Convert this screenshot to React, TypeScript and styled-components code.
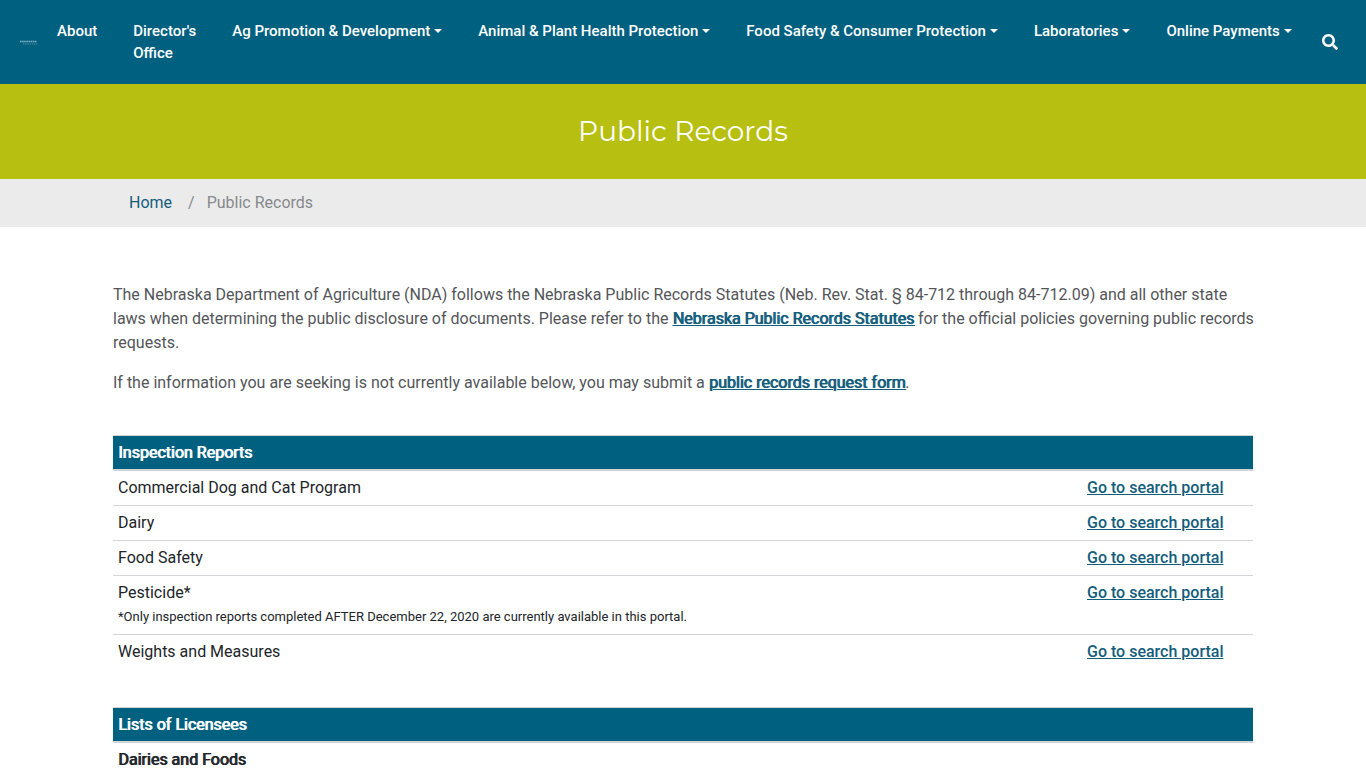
import React from "react";
import styled, { createGlobalStyle, css } from "styled-components";
import { FaSearch } from "react-icons/fa";

const colors = {
  teal: "#00607f",
  lime: "#b7bf10",
  link: "#135d7c",
  rule: "#d3d6d9",
  ink: "#212529",
  body: "#54565a",
};

const emphasis = css`
  font-weight: 400;
  text-shadow: 1px 0 currentColor;
`;

const GlobalStyle = createGlobalStyle`
  *, *::before, *::after { box-sizing: border-box; }
  html { scrollbar-width: none; }
  body {
    margin: 0;
    background: #fff;
    color: ${colors.body};
    font: 400 16px/24px Roboto, "Liberation Sans", sans-serif;
  }
`;

const TopBar = styled.header`
  display: flex;
  align-items: center;
  min-height: 84px;
  padding: 0 20px;
  background: ${colors.teal};
  color: #fff;
`;

const LogoLink = styled.a`
  display: flex;
  flex: none;
  width: 17px;
`;

const NavList = styled.ul`
  display: flex;
  flex: 1;
  gap: 36px;
  align-self: stretch;
  margin: 0;
  padding: 20px 0 20px 20px;
  list-style: none;
`;

const NavItem = styled.li<{ $wrap?: boolean }>`
  width: ${({ $wrap }) => ($wrap ? "min-content" : "auto")};
  white-space: ${({ $wrap }) => ($wrap ? "normal" : "nowrap")};
`;

const NavLink = styled.a<{ $menu?: boolean }>`
  display: flex;
  align-items: center;
  gap: 4px;
  color: #fff;
  font-size: 15px;
  font-weight: 500;
  line-height: 22px;
  text-decoration: none;

  &::after {
    content: ${({ $menu }) => ($menu ? '""' : "none")};
    border: 4px solid transparent;
    border-top-color: #fff;
    border-bottom: 0;
  }
`;

const SearchButton = styled.button`
  display: flex;
  padding: 8px;
  border: 0;
  background: none;
  color: #fff;
  font-size: 16px;
  cursor: pointer;
`;

const TitleBand = styled.div`
  padding: 30px 16px 31px;
  background: ${colors.lime};
  color: #fff;
  text-align: center;
`;

const PageTitle = styled.h1`
  margin: 0;
  font: 400 28px/34px Montserrat, Inter, sans-serif;
`;

const Container = styled.div`
  max-width: 1140px;
  margin: 0 auto;
`;

const CrumbBand = styled.nav`
  background: #ebebeb;
  color: #86898c;
`;

const Crumbs = styled.ol`
  display: flex;
  margin: 0;
  padding: 12px 16px;
  list-style: none;
`;

const Crumb = styled.li`
  & + &::before {
    content: "/";
    padding: 0 12px 0 16px;
  }

  a {
    color: ${colors.link};
    text-decoration: none;
  }
`;

const Main = styled.main`
  padding-top: 56px;
`;

const Intro = styled.div`
  margin: 0 -4px 40px 0;
`;

const Paragraph = styled.p`
  margin: 0 0 16px;
`;

const StrongLink = styled.a`
  ${emphasis}
  color: ${colors.link};
  text-decoration: underline;
`;

const PortalLink = styled.a`
  color: ${colors.link};
  font-weight: 500;
  text-decoration: underline;
`;

const RecordTable = styled.table`
  width: 100%;
  margin-bottom: 38px;
  border-collapse: collapse;
  color: ${colors.ink};
`;

const HeadCell = styled.th`
  ${emphasis}
  padding: 5px 5px 4px;
  border-top: 1px solid ${colors.rule};
  border-bottom: 2px solid ${colors.rule};
  background: ${colors.teal};
  color: #fff;
  text-align: left;
`;

const Row = styled.tr`
  & + & > td {
    border-top: 1px solid ${colors.rule};
  }
`;

const Cell = styled.td`
  padding: 5px;
  vertical-align: top;
`;

const GroupCell = styled(Cell)`
  ${emphasis}
`;

const LinkCell = styled(Cell)`
  width: 171px;
`;

const Note = styled.small`
  display: block;
  font-size: 13px;
`;

const Logo = () => (
  <svg width="17" height="8" viewBox="0 0 17 8" role="img" aria-label="Nebraska">
    <path d="M0 3.5h17" stroke="#fff" strokeOpacity=".5" strokeWidth="1.6" strokeDasharray="1.6 .5" />
    <path d="M3 6h14" stroke="#fff" strokeOpacity=".3" strokeDasharray="1.5 .7" />
  </svg>
);

const navItems = [
  { label: "About" },
  { label: "Director's Office", wrap: true },
  { label: "Ag Promotion & Development", menu: true },
  { label: "Animal & Plant Health Protection", menu: true },
  { label: "Food Safety & Consumer Protection", menu: true },
  { label: "Laboratories", menu: true },
  { label: "Online Payments", menu: true },
];

const reports = [
  { name: "Commercial Dog and Cat Program" },
  { name: "Dairy" },
  { name: "Food Safety" },
  {
    name: "Pesticide*",
    note: "*Only inspection reports completed AFTER December 22, 2020 are currently available in this portal.",
  },
  { name: "Weights and Measures" },
];

export default function App() {
  return (
    <>
      <GlobalStyle />
      <TopBar>
        <LogoLink href="#"><Logo /></LogoLink>
        <NavList>
          {navItems.map((item) => (
            <NavItem key={item.label} $wrap={item.wrap}>
              <NavLink href="#" $menu={item.menu}>{item.label}</NavLink>
            </NavItem>
          ))}
        </NavList>
        <SearchButton type="button" aria-label="Search"><FaSearch /></SearchButton>
      </TopBar>
      <TitleBand>
        <PageTitle>Public Records</PageTitle>
      </TitleBand>
      <CrumbBand aria-label="Breadcrumb">
        <Container>
          <Crumbs>
            <Crumb><a href="#">Home</a></Crumb>
            <Crumb aria-current="page">Public Records</Crumb>
          </Crumbs>
        </Container>
      </CrumbBand>
      <Main>
        <Container>
          <Intro>
            <Paragraph>
              The Nebraska Department of Agriculture (NDA) follows the Nebraska Public Records
              Statutes (Neb. Rev. Stat. § 84-712 through 84-712.09) and all other state laws when
              determining the public disclosure of documents. Please refer to the{" "}
              <StrongLink href="#">Nebraska Public Records Statutes</StrongLink> for the official
              policies governing public records requests.
            </Paragraph>
            <Paragraph>
              If the information you are seeking is not currently available below, you may submit
              a <StrongLink href="#">public records request form</StrongLink>.
            </Paragraph>
          </Intro>
          <RecordTable>
            <thead>
              <tr><HeadCell colSpan={2} scope="colgroup">Inspection Reports</HeadCell></tr>
            </thead>
            <tbody>
              {reports.map((report) => (
                <Row key={report.name}>
                  <Cell>
                    {report.name}
                    {report.note && <Note>{report.note}</Note>}
                  </Cell>
                  <LinkCell><PortalLink href="#">Go to search portal</PortalLink></LinkCell>
                </Row>
              ))}
            </tbody>
          </RecordTable>
          <RecordTable>
            <thead>
              <tr><HeadCell scope="col">Lists of Licensees</HeadCell></tr>
            </thead>
            <tbody>
              <Row><GroupCell>Dairies and Foods</GroupCell></Row>
            </tbody>
          </RecordTable>
        </Container>
      </Main>
    </>
  );
}
